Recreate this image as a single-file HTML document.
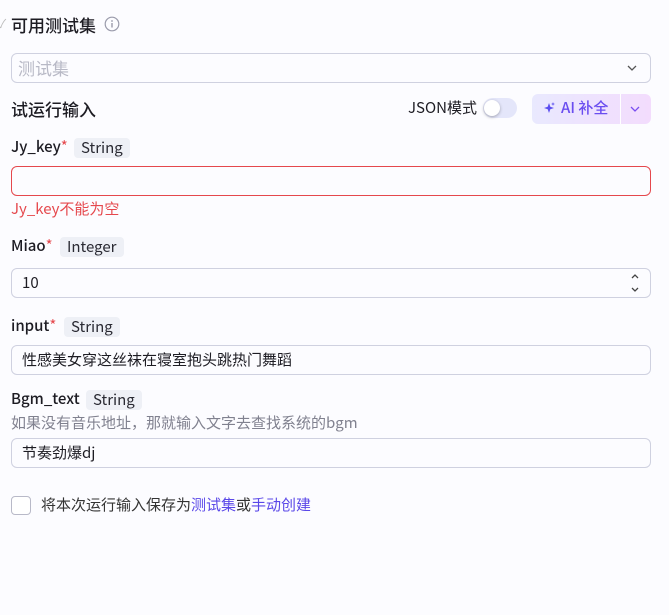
<!DOCTYPE html>
<html><head><meta charset="utf-8"><style>
*{box-sizing:border-box;margin:0;padding:0}
body{width:669px;height:615px;background:#fcfcff;font-family:"Noto Sans CJK SC",sans-serif;color:#1d1c23;position:relative;overflow:hidden}
.a{position:absolute;white-space:nowrap}
.lbl{font-size:15px;font-weight:500;line-height:20px}
.star{color:#e5484d;font-weight:normal}
.tag{position:absolute;height:20px;line-height:20px;background:#eef0f6;border-radius:4px;font-size:15px;padding:0 7px;color:#2a2a33}
.box{position:absolute;left:11px;width:640px;height:30px;border:1px solid #cfd1e0;border-radius:6px;background:#fcfcff;font-size:15px;line-height:28px;padding-left:10px}
</style></head><body>
<div class="a" style="left:-2px;top:15px;font-size:12px;color:#bbb">✓</div>
<div class="a" style="left:11px;top:14px;font-size:17px;font-weight:500;line-height:22px">可用测试集</div>
<svg class="a" style="left:104px;top:16px" width="16" height="16" viewBox="0 0 16 16"><circle cx="8" cy="8" r="6.8" fill="none" stroke="#9a9bab" stroke-width="1.2"/><circle cx="8" cy="5" r="0.9" fill="#9a9bab"/><path d="M8 7v4.5" stroke="#9a9bab" stroke-width="1.4"/></svg>
<div class="box" style="top:53px;color:#b8b9c6;font-size:17px;padding-left:6px">测试集</div>
<svg class="a" style="left:626px;top:62px" width="12" height="12" viewBox="0 0 12 12"><path d="M2 4l4 4 4-4" fill="none" stroke="#555" stroke-width="1.3"/></svg>
<div class="a" style="left:11px;top:98px;font-size:17px;font-weight:500;line-height:22px">试运行输入</div>
<div class="a" style="left:408px;top:98px;font-size:15px;line-height:20px">JSON模式</div>
<div class="a" style="left:483px;top:98px;width:34px;height:20px;border-radius:10px;background:#e4e6fa"></div>
<div class="a" style="left:484px;top:100px;width:16px;height:16px;border-radius:8px;background:#fff;box-shadow:0 1px 3px rgba(0,0,0,.3)"></div>
<div class="a" style="left:532px;top:94px;width:119px;height:30px;border-radius:6px;background:linear-gradient(90deg,#e9e9fe,#f3dcfd)"></div>
<div class="a" style="left:620px;top:94px;width:1px;height:30px;background:#fff"></div>
<svg class="a" style="left:542px;top:101px" width="14" height="14" viewBox="0 0 14 14"><path d="M7 2l1.3 3.7L12 7 8.3 8.3 7 12 5.7 8.3 2 7l3.7-1.3z" fill="#5b4ef0"/><path d="M11 1l.5 1.5L13 3l-1.5.5L11 5l-.5-1.5L9 3l1.5-.5z" fill="#5b4ef0"/></svg>
<div class="a" style="left:561px;top:98px;font-size:15px;line-height:20px;font-weight:500;color:#6a4df0">AI 补全</div>
<svg class="a" style="left:629px;top:103px" width="12" height="12" viewBox="0 0 12 12"><path d="M2 4l4 4 4-4" fill="none" stroke="#7a4ef0" stroke-width="1.3"/></svg>

<div class="a lbl" style="left:11px;top:137px">Jy_key<span class="star">*</span></div>
<div class="tag" style="left:74px;top:138px">String</div>
<div class="box" style="top:166px;border-color:#e5484d"></div>
<div class="a" style="left:11px;top:199px;font-size:15px;line-height:20px;color:#e5484d">Jy_key不能为空</div>

<div class="a lbl" style="left:11px;top:236px">Miao<span class="star">*</span></div>
<div class="tag" style="left:60px;top:237px">Integer</div>
<div class="box" style="top:268px">10</div>
<svg class="a" style="left:629px;top:271px" width="12" height="24" viewBox="0 0 12 24"><path d="M3 7l3-3 3 3M3 17l3 3 3-3" fill="none" stroke="#444" stroke-width="1.3"/></svg>

<div class="a lbl" style="left:11px;top:316px">input<span class="star">*</span></div>
<div class="tag" style="left:64px;top:317px">String</div>
<div class="box" style="top:345px">性感美女穿这丝袜在寝室抱头跳热门舞蹈</div>

<div class="a lbl" style="left:11px;top:389px">Bgm_text</div>
<div class="tag" style="left:86px;top:390px">String</div>
<div class="a" style="left:11px;top:413px;font-size:15px;line-height:20px;color:#80818f">如果没有音乐地址，那就输入文字去查找系统的bgm</div>
<div class="box" style="top:438px">节奏劲爆dj</div>

<div class="a" style="left:11px;top:496px;width:20px;height:19px;border:1px solid #b8b9c8;border-radius:4px;background:#fff"></div>
<div class="a" style="left:41px;top:495px;font-size:15px;line-height:20px;color:#333">将本次运行输入保存为<span style="color:#5a48e8">测试集</span>或<span style="color:#5a48e8">手动创建</span></div>
</body></html>
